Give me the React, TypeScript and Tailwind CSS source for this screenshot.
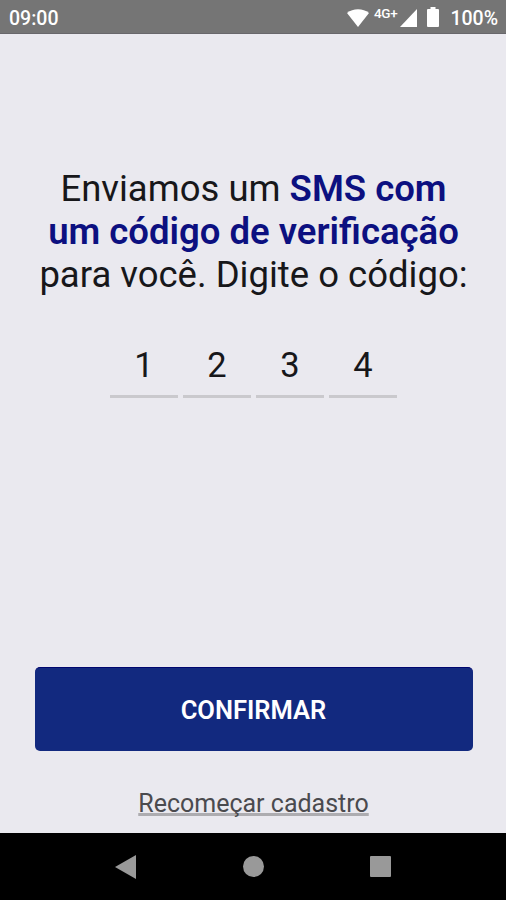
const digits = ["1", "2", "3", "4"];

function StatusBar() {
  return (
    <header className="flex h-[34px] items-center justify-between border-b border-[#68676b] bg-[#757575] pr-2 pl-[9px] text-[19.500px] font-medium text-white">
      <span className="pt-[4px]">09:00</span>
      <div className="flex items-center">
        <svg className="mt-[2px]" width="22" height="18" viewBox="0 0 22 18" fill="currentColor" aria-hidden="true">
          <path d="M0 4C6-1 16-1 22 4L11 18Z" />
        </svg>
        <span className="ml-[5px] -mt-[6px] text-[13.500px] tracking-[-0.3px]">4G+</span>
        <svg className="ml-[3px] mt-[2px]" width="17" height="18" viewBox="0 0 17 18" fill="currentColor" aria-hidden="true">
          <path d="M17 0V18H0Z" />
        </svg>
        <svg className="ml-[10px] mt-[1px]" width="12" height="20" viewBox="0 0 12 20" fill="currentColor" aria-hidden="true">
          <path d="M3.500 0h5v2H11q1 0 1 1v16q0 1-1 1H1q-1 0-1-1V3q0-1 1-1h2.500Z" />
        </svg>
        <span className="ml-[11px] pt-[4px]">100%</span>
      </div>
    </header>
  );
}

function NavigationBar() {
  return (
    <nav className="flex h-[67px] items-center justify-center gap-[106px] bg-black text-[#999999]">
      <svg className="-ml-px mr-px" width="21" height="24" viewBox="0 0 21 24" fill="currentColor" aria-hidden="true">
        <path d="M21 0V24L0 12Z" />
      </svg>
      <div className="size-[21px] rounded-full bg-[#999999]" />
      <div className="size-[21px] rounded-[1px] bg-[#999999]" />
    </nav>
  );
}

export default function App() {
  return (
    <div className="flex h-[900px] w-[506px] flex-col overflow-hidden bg-[#eae9ef] font-['Roboto',sans-serif] text-[#17171a]">
      <StatusBar />
      <main className="flex flex-1 flex-col items-center">
        <h1 className="mt-[133px] ml-px text-center text-[36.500px] leading-[43px] font-normal whitespace-nowrap">
          Enviamos um <strong className="font-semibold text-[#0c1080]">SMS com</strong>
          <br />
          <strong className="font-semibold text-[#0c1080]">um código de verificação</strong>
          <br />
          para você. Digite o código:
        </h1>
        <div className="mt-[49px] ml-px flex gap-[5px]">
          {digits.map((digit) => (
            <div key={digit} className="h-[53px] w-[68px] border-b-[3px] border-[#cac9cd] text-center text-[34.500px] leading-[41px] font-normal">
              {digit}
            </div>
          ))}
        </div>
        <button className="mt-auto ml-px h-[84px] w-[438px] rounded-[5px] border-t border-[#00066f] bg-[#12297f] pt-[2px] text-[25.500px] font-semibold text-white">
          CONFIRMAR
        </button>
        <a
          href="#"
          className="mt-[37px] mb-[13px] ml-px text-[25px] leading-[32px] text-[#4a4a4e] underline decoration-[#adacb0] decoration-[3px] underline-offset-[1px] [text-decoration-skip-ink:none]"
        >
          Recomeçar cadastro
        </a>
      </main>
      <NavigationBar />
    </div>
  );
}
